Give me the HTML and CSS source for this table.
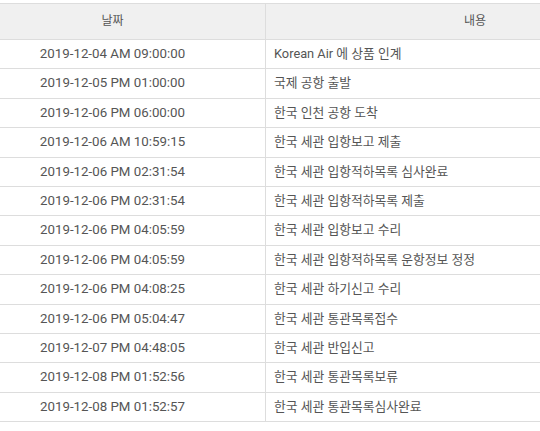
FILE: index.html
```html
<!DOCTYPE html>
<html lang="ko">
<head>
<meta charset="utf-8">
<link rel="stylesheet" href="styles.css">
</head>
<body>
<div class="wrap">
<table class="track">
<thead>
<tr><th class="c-date">날짜</th><th class="c-text">내용</th></tr>
</thead>
<tbody>
<tr><td class="c-date">2019-12-04 AM 09:00:00</td><td class="c-text">Korean Air 에 상품 인계</td></tr>
<tr><td class="c-date">2019-12-05 PM 01:00:00</td><td class="c-text">국제 공항 출발</td></tr>
<tr><td class="c-date">2019-12-06 PM 06:00:00</td><td class="c-text">한국 인천 공항 도착</td></tr>
<tr><td class="c-date">2019-12-06 AM 10:59:15</td><td class="c-text">한국 세관 입항보고 제출</td></tr>
<tr><td class="c-date">2019-12-06 PM 02:31:54</td><td class="c-text">한국 세관 입항적하목록 심사완료</td></tr>
<tr><td class="c-date">2019-12-06 PM 02:31:54</td><td class="c-text">한국 세관 입항적하목록 제출</td></tr>
<tr><td class="c-date">2019-12-06 PM 04:05:59</td><td class="c-text">한국 세관 입항보고 수리</td></tr>
<tr><td class="c-date">2019-12-06 PM 04:05:59</td><td class="c-text">한국 세관 입항적하목록 운항정보 정정</td></tr>
<tr><td class="c-date">2019-12-06 PM 04:08:25</td><td class="c-text">한국 세관 하기신고 수리</td></tr>
<tr><td class="c-date">2019-12-06 PM 05:04:47</td><td class="c-text">한국 세관 통관목록접수</td></tr>
<tr><td class="c-date">2019-12-07 PM 04:48:05</td><td class="c-text">한국 세관 반입신고</td></tr>
<tr><td class="c-date">2019-12-08 PM 01:52:56</td><td class="c-text">한국 세관 통관목록보류</td></tr>
<tr><td class="c-date">2019-12-08 PM 01:52:57</td><td class="c-text">한국 세관 통관목록심사완료</td></tr>
</tbody>
</table>
</div>
</body>
</html>
```
FILE: styles.css
```css
html, body {
  margin: 0;
  padding: 0;
  background: #fff;
}
body {
  font-family: Roboto, "Noto Sans CJK KR", sans-serif;
  font-size: 12px;
  color: #555;
}
.wrap {
  width: 540px;
  overflow: hidden;
  padding-top: 3px;
}
.track {
  margin-left: -41px;
  width: 726px;
  border-collapse: collapse;
  table-layout: fixed;
}
.track th,
.track td {
  border: 1px solid #ddd;
  padding: 5px 8px;
  line-height: 18.4px;
  font-weight: 400;
  white-space: nowrap;
}
.track th {
  background: #f0f0f0;
  height: 25px;
  text-align: center;
}
.track .c-date {
  width: 289px;
  text-align: center;
}
.track td.c-date {
  font-size: 13.3px;
}
.track td.c-text {
  text-align: left;
  font-size: 12.8px;
}
```
